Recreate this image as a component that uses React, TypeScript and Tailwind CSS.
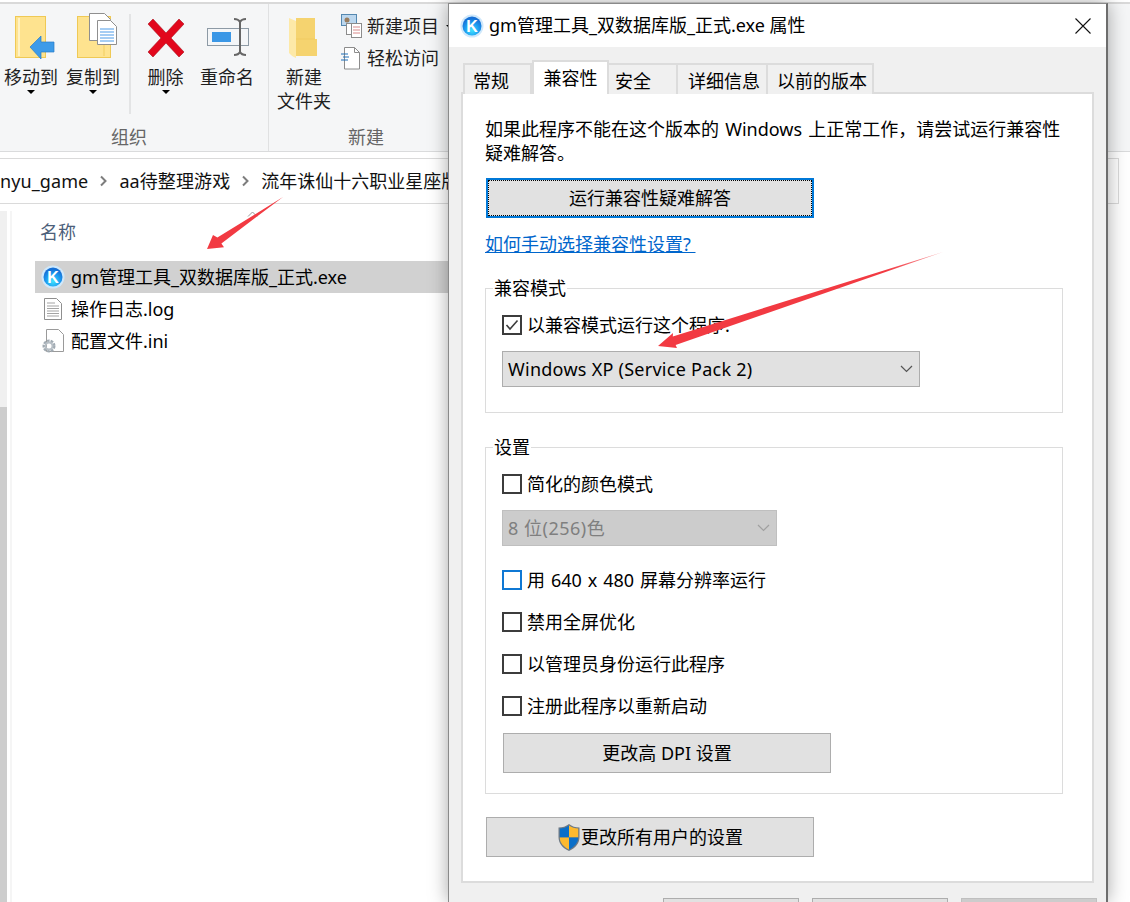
import React from 'react';

function KIcon({ id, size }: { id: string; size: number }) {
  return (
    <svg width={size} height={size} viewBox="0 0 24 24" className="shrink-0">
      <defs>
        <radialGradient id={id} cx="50%" cy="72%" r="62%">
          <stop offset="0%" stopColor="#3fe4ff" />
          <stop offset="60%" stopColor="#1c9bf0" />
          <stop offset="100%" stopColor="#1670d6" />
        </radialGradient>
      </defs>
      <circle cx="12" cy="12" r="11.500" fill="#cfe8fb" />
      <circle cx="12" cy="12" r="9.500" fill={`url(#${id})`} />
      <text x="12" y="17.500" textAnchor="middle" fontSize="16" fontWeight="700" fill="#fff" fontFamily="Liberation Sans, sans-serif">K</text>
    </svg>
  );
}

function Caret() {
  return <span className="mt-[1px] block h-0 w-0 border-x-[4px] border-t-[4px] border-x-transparent border-t-black" />;
}

function RibbonButton({ label, view, caret, children }: { label: string[]; view: string; caret?: boolean; children: React.ReactNode }) {
  const w = view.split(' ')[2];
  return (
    <div className="flex flex-col items-center" style={{ width: Number(w) }}>
      <svg width={w} height="48" viewBox={view} className="shrink-0">{children}</svg>
      <div className="mt-[5px] flex flex-col items-center text-[#1f1f1f]">
        {label.map((l) => <span key={l} className="h-6 whitespace-nowrap leading-6">{l}</span>)}
      </div>
      {caret && <Caret />}
    </div>
  );
}

function Ribbon() {
  return (
    <div className="mt-[2px] flex h-[150px] border-t-2 border-b border-t-[#d9d9d9] border-b-[#dadbdc] bg-[#f5f6f7]">
      <div className="flex w-[269px] shrink-0 flex-col justify-between border-r border-r-[#e0e1e2] pt-[8px] pb-[2px]">
        <div className="flex">
          <RibbonButton label={['移动到']} view="0 12 62 48" caret>
            <rect x="15.500" y="16.500" width="30" height="41" fill="#fee38f" stroke="#efc955" />
            <path d="M19 18v38" stroke="#fff2c4" strokeWidth="2" />
            <path d="M30 47l11-11v6h13v10H41v7z" fill="#3d9be9" stroke="#2a7cc7" strokeWidth="0.700" />
          </RibbonButton>
          <RibbonButton label={['复制到']} view="62 12 62 48" caret>
            <rect x="77.500" y="16.500" width="33" height="41" fill="#fee38f" stroke="#efc955" />
            <path d="M104 18v38" stroke="#f0cd60" />
            <path d="M89.500 13.500h15l6 6v21h-21z" fill="#fff" stroke="#8f8f8f" />
            <path d="M97.500 20.500h13l6 6v18h-19z" fill="#fff" stroke="#8f8f8f" />
            <path d="M100 29h14M100 32h14M100 35h14M100 38h14M100 41h14" stroke="#4c9be8" />
          </RibbonButton>
          <div className="mt-[2px] ml-[5px] h-[100px] w-[2px] bg-[#e3e4e5]" />
          <div className="w-[4px]" />
          <RibbonButton label={['删除']} view="135 12 61 48" caret>
            <path d="M153 19l13 14 13-14 5 5-13 14 13 14-5 5-13-14-13 14-5-5 13-14-13-14z" fill="#e2071c" stroke="#a8101c" strokeWidth="0.600" />
          </RibbonButton>
          <RibbonButton label={['重命名']} view="196 12 62 48">
            <rect x="207.500" y="28.500" width="41" height="17" fill="#f4f6f8" stroke="#8d9aa5" />
            <rect x="212" y="32" width="19" height="10" fill="#3a97e6" />
            <path d="M234 19c3 0 5 1 6 3v30c-1 2-3 3-6 3M246 19c-3 0-5 1-6 3M240 52c1 2 3 3 6 3" fill="none" stroke="#666" strokeWidth="2" />
          </RibbonButton>
        </div>
        <div className="pr-[10px] text-center leading-6 text-[#666]">组织</div>
      </div>
      <div className="flex w-[194px] shrink-0 flex-col justify-between pt-[8px] pb-[2px]">
        <div className="flex">
          <div className="ml-[4px]">
            <RibbonButton label={['新建', '文件夹']} view="273 12 62 48">
              <path d="M289 18l7 3v37c-3-1-5-3-7-5z" fill="#fde9a8" />
              <path d="M296 18h19v21h2v17h-21z" fill="#f5d36f" />
              <path d="M296 39h19" stroke="#f1cb62" />
            </RibbonButton>
          </div>
          <div className="ml-[6px] -mt-[2px] flex flex-col">
            <div className="flex h-8 items-center gap-[5px] text-[#1f1f1f]">
              <svg width="21" height="24" viewBox="0 0 21 24" className="shrink-0">
                <rect x="0.500" y="0.500" width="15" height="11" fill="#bcd7ee" stroke="#5588b0" />
                <circle cx="6" cy="6" r="2.500" fill="#9a7d5f" />
                <rect x="5.500" y="9.500" width="7" height="11" fill="#fff" stroke="#8c8c8c" />
                <rect x="10.500" y="9.500" width="10" height="14" fill="#fff" stroke="#8c8c8c" />
                <path d="M12 13h7M12 16h7M12 19h7" stroke="#d98a8a" />
              </svg>
              <span className="leading-6 whitespace-nowrap">新建项目</span>
              <span className="ml-[2px] h-0 w-0 border-x-[3px] border-t-[3px] border-x-transparent border-t-black" />
            </div>
            <div className="flex h-8 items-center gap-[7px] text-[#1f1f1f]">
              <svg width="19" height="24" viewBox="0 0 19 24" className="shrink-0">
                <path d="M3.500 1.500h10l5 5v16.500h-15z" fill="#fff" stroke="#8c8c8c" />
                <path d="M13.500 1.500v5h5" fill="none" stroke="#8c8c8c" />
                <path d="M0 8h7M2 11h6M0 14h7" stroke="#1f6fb8" strokeWidth="1" />
              </svg>
              <span className="leading-6 whitespace-nowrap">轻松访问</span>
            </div>
          </div>
        </div>
        <div className="text-center leading-6 text-[#666]">新建</div>
      </div>
    </div>
  );
}

function Chevron() {
  return (
    <svg width="9" height="12" viewBox="0 0 9 12" className="shrink-0">
      <path d="M2 1.500l4.500 4.500L2 10.500" fill="none" stroke="#7d7d7d" strokeWidth="2" />
    </svg>
  );
}

function FileRow({ name, selected, icon }: { name: string; selected?: boolean; icon: React.ReactNode }) {
  return (
    <div className={`flex h-8 w-[430px] items-center ${selected ? 'bg-[#d1d1d1]' : ''}`}>
      <div className="flex w-[36px] justify-end">{icon}</div>
      <span className="whitespace-nowrap text-black">{name}</span>
    </div>
  );
}

function Explorer() {
  return (
    <div className="h-[902px] w-[1130px] overflow-hidden bg-white">
      <Ribbon />
      <div className="pt-[6px]">
        <div className="-ml-px flex h-[46px] w-[1120px] items-center overflow-hidden border border-[#dadada] text-[#111]">
          <span className="whitespace-nowrap tracking-[0.1px]">nyu_game</span>
          <div className="mx-[11px]"><Chevron /></div>
          <span className="whitespace-nowrap tracking-[0.1px]">aa待整理游戏</span>
          <div className="mx-[11px]"><Chevron /></div>
          <span className="whitespace-nowrap">流年诛仙十六职业星座版</span>
        </div>
      </div>
      <div className="mt-[7px] flex h-[691px]">
        <div className="flex w-[7px] flex-col bg-[#f0f0f0]">
          <div className="h-[196px] shrink-0" />
          <div className="flex-1 bg-[#cdcdcd]" />
        </div>
        <div className="ml-[3px] w-[2px] bg-[#f5f5f5]" />
        <div className="relative pl-[23px]">
          <svg width="11" height="6" viewBox="0 0 11 6" className="absolute top-0 left-[235px]">
            <path d="M1 5.500l4.500-4.500 4.500 4.500" fill="none" stroke="#9a9a9a" />
          </svg>
          <div className="flex h-[42px] items-center pl-[5px] text-[#4c607a]">名称</div>
          <div className="mt-[8px] flex flex-col">
            <FileRow name="gm管理工具_双数据库版_正式.exe" selected icon={<div className="mr-[6px]"><KIcon id="k1" size={24} /></div>} />
            <FileRow
              name="操作日志.log"
              icon={
                <svg width="18" height="22" viewBox="0 0 18 22" className="mr-[9px]">
                  <path d="M.5.500h12l5 5v16H.500z" fill="#fff" stroke="#8f8f8f" />
                  <path d="M3 5h8M3 8h12M3 10.500h12M3 13h12M3 15.500h12M3 18h12" stroke="#a3a3a3" />
                </svg>
              }
            />
            <FileRow
              name="配置文件.ini"
              icon={
                <svg width="22" height="24" viewBox="0 0 22 24" className="mr-[7px]">
                  <path d="M4.500.500h12l5 5v17h-17z" fill="#fff" stroke="#9a9a9a" />
                  <circle cx="7" cy="17" r="5" fill="none" stroke="#a0aab2" strokeWidth="3" strokeDasharray="2.500 1" />
                  <circle cx="7" cy="17" r="3.500" fill="none" stroke="#b8c0c6" strokeWidth="2" />
                </svg>
              }
            />
          </div>
        </div>
      </div>
    </div>
  );
}

function Checkbox({ checked, blue }: { checked?: boolean; blue?: boolean }) {
  return (
    <span className={`flex h-5 w-5 shrink-0 items-center justify-center border-2 bg-white ${blue ? 'border-[#0f78d4]' : 'border-[#3c3c3c]'}`}>
      {checked && (
        <svg width="14" height="12" viewBox="0 0 14 12">
          <path d="M1.500 6l3.500 4 7.500-8.500" fill="none" stroke="#3c3c3c" strokeWidth="1.600" />
        </svg>
      )}
    </span>
  );
}

function CheckRow({ label, checked, blue, className }: { label: string; checked?: boolean; blue?: boolean; className: string }) {
  return (
    <div className={`flex h-6 items-center gap-[5px] ${className}`}>
      <Checkbox checked={checked} blue={blue} />
      <span className="whitespace-nowrap">{label}</span>
    </div>
  );
}

function SelectArrow({ color }: { color: string }) {
  return (
    <svg width="13" height="8" viewBox="0 0 13 8">
      <path d="M1 1l5.500 5.500L12 1" fill="none" stroke={color} strokeWidth="1.200" />
    </svg>
  );
}

function Dialog() {
  const tabClass = 'flex h-[31px] items-center border-t-2 border-r-2 border-[#dcdcdc] bg-[#f0f0f0] pt-[3px]';
  return (
    <div className="absolute top-[3px] left-[448px] flex h-[899px] w-[660px] flex-col overflow-hidden border-t border-r-2 border-l border-t-[#8a8a8a] border-r-[#6d6d6d] border-l-[#8a8a8a] bg-[#f0f0f0] text-black shadow-[0_0_18px_rgba(0,0,0,0.35)]">
      <div className="flex h-[43px] shrink-0 items-center bg-white pr-[15px] pl-[11px]">
        <KIcon id="k2" size={24} />
        <span className="ml-[5px] whitespace-nowrap">gm管理工具_双数据库版_正式.exe 属性</span>
        <svg width="16" height="16" viewBox="0 0 16 16" className="mt-[1px] ml-auto">
          <path d="M.500.500l15 15M15.500.500l-15 15" stroke="#111" strokeWidth="1.100" />
        </svg>
      </div>

      {/* tabs */}
      <div className="relative z-10 mt-[13px] -mb-[2px] flex h-[34px] shrink-0 items-end pl-[14px]">
        <div className={`${tabClass} w-[69px] border-l-2 pl-[8px]`}>常规</div>
        <div className="flex h-[34px] w-[77px] items-start justify-center border-x-2 border-t-2 border-[#dcdcdc] bg-white pt-[3px]">兼容性</div>
        <div className={`${tabClass} w-[69px] pl-[6px]`}>安全</div>
        <div className={`${tabClass} w-[90px] pl-[10px]`}>详细信息</div>
        <div className={`${tabClass} w-[106px] pl-[9px]`}>以前的版本</div>
      </div>

      {/* panel */}
      <div className="ml-[12px] h-[791px] w-[633px] shrink-0 border-2 border-[#dcdcdc] bg-white">
        <p className="mt-[23px] ml-[22px] w-[590px] leading-6 [word-spacing:1.500px]">
          如果此程序不能在这个版本的 Windows 上正常工作，请尝试运行兼容性疑难解答。
        </p>
        <div className="mt-[13px] ml-[23px] flex h-10 w-[328px] items-center justify-center border-2 border-[#0078d7] bg-[#e1e1e1] outline-1 -outline-offset-3 outline-black outline-dotted">
          运行兼容性疑难解答
        </div>
        <div className="mt-[14px] ml-[22px] leading-6 text-[#0066cc] underline">如何手动选择兼容性设置?&nbsp;</div>

        <div className="relative mt-[32px] ml-[22px] h-[125px] w-[578px] border border-[#dcdcdc] px-[16px] pt-[24px]">
          <span className="absolute -top-[13px] left-[7px] bg-white px-px leading-6">兼容模式</span>
          <CheckRow label="以兼容模式运行这个程序:" checked className="" />
          <div className="mt-[14px] flex h-9 w-[418px] items-center justify-between border border-[#adadad] bg-[#e1e1e1] pr-[6px] pl-[5px]">
            <span className="tracking-[0.26px]">Windows XP (Service Pack 2)</span>
            <SelectArrow color="#555" />
          </div>
        </div>

        <div className="relative mt-[34px] ml-[22px] h-[347px] w-[578px] border border-[#dcdcdc] px-[16px] pt-[24px]">
          <span className="absolute -top-[13px] left-[7px] bg-white px-px leading-6">设置</span>
          <CheckRow label="简化的颜色模式" className="" />
          <div className="mt-[14px] flex h-9 w-[275px] items-center justify-between border border-[#bfbfbf] bg-[#cccccc] pr-[6px] pl-[5px] text-[#7f7f7f]">
            <span className="tracking-[0.5px]">8 位(256)色</span>
            <SelectArrow color="#a0a0a0" />
          </div>
          <CheckRow label="用 640 x 480 屏幕分辨率运行" blue className="mt-[22px] [word-spacing:1.250px]" />
          <CheckRow label="禁用全屏优化" className="mt-[18px]" />
          <CheckRow label="以管理员身份运行此程序" className="mt-[18px]" />
          <CheckRow label="注册此程序以重新启动" className="mt-[18px]" />
          <div className="mt-[15px] ml-px flex h-10 w-[328px] items-center justify-center border border-[#adadad] bg-[#e1e1e1]">
            更改高 DPI 设置
          </div>
        </div>

        <div className="mt-[23px] ml-[23px] flex h-10 w-[328px] items-center justify-center border border-[#adadad] bg-[#e1e1e1]">
          <svg width="24" height="29" viewBox="0 0 24 29" className="shrink-0">
            <path d="M12 1c3 2.500 6.500 3.500 10.500 3.500V14c0 6.500-4 11-10.500 14C5.500 25 1.500 20.500 1.500 14V4.500C5.500 4.500 9 3.500 12 1z" fill="#6f7a85" />
            <path d="M12 2.500v12H2.800V5.600C6 5.400 9.500 4.500 12 2.500z" fill="#0b6fc8" />
            <path d="M12 2.500c2.500 2 6 2.900 9.200 3.100v8.900H12z" fill="#fdb92e" />
            <path d="M2.800 14.500H12v12c-5.500-2.800-9.200-6.800-9.200-12z" fill="#fdb92e" />
            <path d="M21.200 14.500H12v12c5.500-2.800 9.200-6.800 9.200-12z" fill="#0b6fc8" />
          </svg>
          <span>更改所有用户的设置</span>
        </div>
      </div>

      {/* footer */}
      <div className="mt-[15px] flex justify-end gap-[13px] pr-[9px]">
        <div className="h-10 w-[136px] shrink-0 border border-[#adadad] bg-[#e1e1e1]" />
        <div className="h-10 w-[136px] shrink-0 border border-[#adadad] bg-[#e1e1e1]" />
        <div className="h-10 w-[136px] shrink-0 border border-[#bfbfbf] bg-[#cccccc]" />
      </div>
    </div>
  );
}

export default function App() {
  return (
    <div className="relative h-[902px] w-[1130px] overflow-hidden bg-white font-['Noto_Sans','Noto_Sans_CJK_SC',sans-serif] text-[18px]">
      <Explorer />
      <Dialog />
      {/* red annotation arrows */}
      <svg width="1130" height="902" viewBox="0 0 1130 902" className="pointer-events-none absolute top-0 left-0">
        <defs>
          <linearGradient id="fade1" x1="658" y1="346" x2="943" y2="252" gradientUnits="userSpaceOnUse">
            <stop offset="0%" stopColor="#f23a42" />
            <stop offset="80%" stopColor="#f23a42" />
            <stop offset="100%" stopColor="#f9a0a4" />
          </linearGradient>
        </defs>
        <polygon points="207,249 213,235 217.400,237.600 283,197 221.400,243.400 224,247.300" fill="#f23a42" />
        <polygon points="658,346 673,333 672.800,336.400 943,252 675.600,345 677,348" fill="url(#fade1)" />
      </svg>
    </div>
  );
}
